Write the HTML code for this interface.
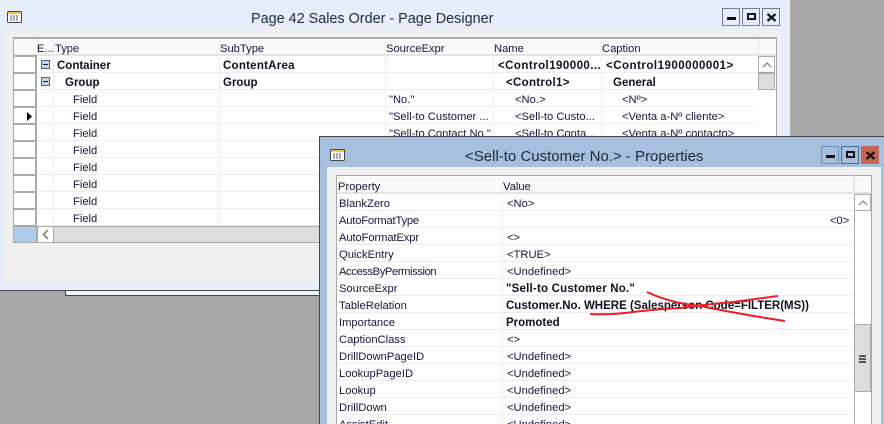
<!DOCTYPE html>
<html><head><meta charset="utf-8"><style>
html,body{margin:0;padding:0;width:884px;height:424px;overflow:hidden;background:#a8a8a8}
div,span{position:absolute;box-sizing:border-box}
.t{font:11.2px/16px "Liberation Sans",sans-serif;color:#15153f;white-space:nowrap;margin-top:1px}
.b{font:bold 11.5px/16px "Liberation Sans",sans-serif;color:#101020}
.h{color:#15153f}
.tb{font:15px/20px "Liberation Sans",sans-serif;color:#222c3c;white-space:nowrap;margin-top:1px}
.btn{border:1px solid #6d7f9c;width:18px;height:18px}
#clip{left:0;top:0;width:884px;height:424px;overflow:hidden}
</style></head><body><div id="clip">
<div style="left:65px;top:290px;width:260px;height:6px;background:#eef2fb;border:1px solid #444;border-width:1px 0 1px 1px"></div>
<div style="left:0;top:0;width:790px;height:291px;background:#e6edfb;border-bottom:1px solid #4a4a4a"></div>
<div style="left:4px;top:30px;width:778px;height:253px;background:#f0f0f0"></div>
<svg style="position:absolute;left:7px;top:10px" width="16" height="14"><rect x=".5" y="1.5" width="14" height="11" rx="1" fill="#fff" stroke="#44464a"/><rect x="1" y="2" width="13" height="2" fill="#f2c24a"/><path d="M3 6h9M3 8h9M3 10h9" stroke="#555" stroke-dasharray="2 1"/></svg>
<div class="tb" style="left:251px;top:8px;font-size:14.4px">Page 42 Sales Order - Page Designer</div>
<div class="btn" style="left:722px;top:8px"><span style="left:4px;top:8px;width:9px;height:3px;background:#111"></span></div>
<div class="btn" style="left:742px;top:8px"><span style="left:4px;top:4px;width:9px;height:7px;border:2px solid #111"></span></div>
<div class="btn" style="left:762px;top:8px"><svg style="position:absolute;left:3px;top:4px" width="11" height="10"><path d="M1.5 1l8 7M9.5 1l-8 7" stroke="#111" stroke-width="2.2"/></svg></div>

<div style="left:13px;top:37px;width:764px;height:206px;background:#fff;border:1px solid #aaa;border-width:2px 1px 1px 1px"></div>
<div style="left:14px;top:39px;width:762px;height:17px;background:#fafafa;border-bottom:2px solid #e4e4e4"></div>
<div style="left:37px;top:56px;width:721px;height:170px;background:repeating-linear-gradient(to bottom,#fff 0,#fff 16px,#eeeeee 16px,#eeeeee 17px)"></div>
<div style="left:14px;top:55px;width:23px;height:172px;background:repeating-linear-gradient(to bottom,#aaa 0,#aaa 2px,#fff 2px,#fff 17px);border-right:2px solid #aaa"></div>
<div style="left:37px;top:39px;width:1px;height:17px;background:#e4e4e4"></div>
<div style="left:53px;top:39px;width:1px;height:187px;background:#eee"></div>
<div style="left:219px;top:39px;width:1px;height:187px;background:#eee"></div>
<div style="left:385px;top:39px;width:1px;height:187px;background:#eee"></div>
<div style="left:493px;top:39px;width:1px;height:187px;background:#eee"></div>
<div style="left:601px;top:39px;width:1px;height:187px;background:#eee"></div>
<div style="left:758px;top:39px;width:1px;height:17px;background:#e4e4e4"></div>
<div style="left:14px;top:226px;width:762px;height:1px;background:#aaa"></div>
<div style="left:14px;top:227px;width:22px;height:15px;background:#aecdec"></div>
<div style="left:36px;top:227px;width:2px;height:15px;background:#aaa"></div>
<div style="left:38px;top:227px;width:16px;height:15px;background:#fff;border-right:1px solid #aaa"><svg style="position:absolute;left:3px;top:2px" width="10" height="11"><path d="M7 1L2.5 5.5L7 10" fill="none" stroke="#777" stroke-width="1.5"/></svg></div>
<div style="left:54px;top:227px;width:722px;height:15px;background:#dcdcdc"></div>
<div style="left:758px;top:56px;width:18px;height:170px;background:#fff"></div>
<div style="left:758px;top:56px;width:17px;height:17px;border:1px solid #aaa;background:#fff"><svg style="position:absolute;left:3px;top:4px" width="10" height="8"><path d="M1 6L5 2L9 6" fill="none" stroke="#888" stroke-width="1.3"/></svg></div>
<div style="left:758px;top:73px;width:17px;height:17px;border:1px solid #aaa;background:#dcdcdc"></div>

<div style="left:41px;top:60px;width:9px;height:9px;background:#c5d3e6;border:1px solid #4e6382"><span style="left:1px;top:3px;width:5px;height:1px;background:#123"></span></div>
<div style="left:41px;top:77px;width:9px;height:9px;background:#c5d3e6;border:1px solid #4e6382"><span style="left:1px;top:3px;width:5px;height:1px;background:#123"></span></div>
<svg style="position:absolute;left:26px;top:112px" width="7" height="10"><path d="M1 0L6 4.5L1 9Z" fill="#000"/></svg>

<div class="t h" style="left:37px;top:40px">E...</div>
<div class="t h" style="left:55px;top:40px">Type</div>
<div class="t h" style="left:220px;top:40px">SubType</div>
<div class="t h" style="left:386px;top:40px">SourceExpr</div>
<div class="t h" style="left:494px;top:40px">Name</div>
<div class="t h" style="left:602px;top:40px">Caption</div>

<div class="t b" style="left:57px;top:57px">Container</div>
<div class="t b" style="left:223px;top:57px;letter-spacing:.25px">ContentArea</div>
<div class="t b" style="left:498px;top:57px;letter-spacing:.45px">&lt;Control190000...</div>
<div class="t b" style="left:606px;top:57px;letter-spacing:.5px">&lt;Control1900000001&gt;</div>
<div class="t b" style="left:65px;top:74px">Group</div>
<div class="t b" style="left:223px;top:74px">Group</div>
<div class="t b" style="left:506px;top:74px;letter-spacing:.3px">&lt;Control1&gt;</div>
<div class="t b" style="left:613px;top:74px">General</div>
<div class="t" style="left:73px;top:91px">Field</div>
<div class="t" style="left:389px;top:91px">"No."</div>
<div class="t" style="left:515px;top:91px">&lt;No.&gt;</div>
<div class="t" style="left:622px;top:91px">&lt;Nº&gt;</div>
<div class="t" style="left:73px;top:108px">Field</div>
<div class="t" style="left:389px;top:108px">"Sell-to Customer ...</div>
<div class="t" style="left:515px;top:108px">&lt;Sell-to Custo...</div>
<div class="t" style="left:622px;top:108px">&lt;Venta a-Nº cliente&gt;</div>
<div class="t" style="left:73px;top:125px">Field</div>
<div class="t" style="left:389px;top:125px">"Sell-to Contact No."</div>
<div class="t" style="left:515px;top:125px">&lt;Sell-to Conta...</div>
<div class="t" style="left:622px;top:125px">&lt;Venta a-Nº contacto&gt;</div>
<div class="t" style="left:73px;top:142px">Field</div>
<div class="t" style="left:73px;top:159px">Field</div>
<div class="t" style="left:73px;top:176px">Field</div>
<div class="t" style="left:73px;top:193px">Field</div>
<div class="t" style="left:73px;top:210px">Field</div>

<div style="left:319px;top:136px;width:565px;height:288px;background:#a6bfdc;border:1px solid #3f4650;border-width:1px 0 0 1px"></div>
<div style="left:327px;top:167px;width:554px;height:257px;background:#f0f0f0"></div>
<svg style="position:absolute;left:330px;top:148px" width="16" height="14"><rect x=".5" y="1.5" width="14" height="11" rx="1" fill="#fff" stroke="#44464a"/><rect x="1" y="2" width="13" height="2" fill="#f2c24a"/><path d="M3 6h9M3 8h9M3 10h9" stroke="#555" stroke-dasharray="2 1"/></svg>
<div class="tb" style="left:465px;top:146px;font-size:15px">&lt;Sell-to Customer No.&gt; - Properties</div>
<div class="btn" style="left:821px;top:146px;border-color:#6d8db5"><span style="left:4px;top:8px;width:9px;height:3px;background:#111"></span></div>
<div class="btn" style="left:841px;top:146px;border-color:#4a6a90"><span style="left:4px;top:4px;width:9px;height:7px;border:2px solid #111"></span></div>
<div class="btn" style="left:861px;top:146px;background:#cd6250;border-color:#b9705f"><svg style="position:absolute;left:3px;top:4px" width="11" height="10"><path d="M1.5 1l8 7M9.5 1l-8 7" stroke="#111" stroke-width="2.2"/></svg></div>

<div style="left:336px;top:175px;width:536px;height:249px;background:#fff;border:1px solid #aaa;border-bottom:0"></div>
<div style="left:337px;top:177px;width:534px;height:17px;background:#fafafa;border-bottom:2px solid #e4e4e4"></div>
<div style="left:337px;top:194px;width:517px;height:230px;background:repeating-linear-gradient(to bottom,#fff 0,#fff 16px,#eeeeee 16px,#eeeeee 17px)"></div>
<div style="left:502px;top:177px;width:1px;height:247px;background:#eee"></div>
<div style="left:853px;top:177px;width:2px;height:17px;background:#e4e4e4"></div>
<div style="left:854px;top:194px;width:17px;height:230px;background:#fff;border-left:1px solid #aaa"></div>
<div style="left:854px;top:194px;width:17px;height:17px;border:1px solid #aaa;background:#fff"><svg style="position:absolute;left:3px;top:4px" width="10" height="8"><path d="M1 6L5 2L9 6" fill="none" stroke="#888" stroke-width="1.3"/></svg></div>
<div style="left:854px;top:324px;width:17px;height:68px;border:1px solid #aaa;background:#dcdcdc"><span style="left:4px;top:30px;width:7px;height:8px;background:repeating-linear-gradient(to bottom,#555 0,#555 2px,#dcdcdc 2px,#dcdcdc 3px)"></span></div>

<div class="t h" style="left:338px;top:178px">Property</div>
<div class="t h" style="left:503px;top:178px">Value</div>

<div class="t" style="left:339px;top:195px">BlankZero</div><div class="t" style="left:507px;top:195px">&lt;No&gt;</div>
<div class="t" style="left:339px;top:212px;letter-spacing:-.2px">AutoFormatType</div><div class="t" style="left:830px;top:212px">&lt;0&gt;</div>
<div class="t" style="left:339px;top:229px;letter-spacing:-.1px">AutoFormatExpr</div><div class="t" style="left:507px;top:229px">&lt;&gt;</div>
<div class="t" style="left:339px;top:246px">QuickEntry</div><div class="t" style="left:507px;top:246px">&lt;TRUE&gt;</div>
<div class="t" style="left:339px;top:263px;letter-spacing:-.4px">AccessByPermission</div><div class="t" style="left:507px;top:263px">&lt;Undefined&gt;</div>
<div class="t" style="left:339px;top:280px">SourceExpr</div><div class="t b" style="left:506px;top:280px;letter-spacing:.2px">"Sell-to Customer No."</div>
<div class="t" style="left:339px;top:297px">TableRelation</div><div class="t b" style="left:506px;top:297px">Customer.No. WHERE (Salesperson Code=FILTER(MS))</div>
<div class="t" style="left:339px;top:314px">Importance</div><div class="t b" style="left:506px;top:314px">Promoted</div>
<div class="t" style="left:339px;top:331px">CaptionClass</div><div class="t" style="left:507px;top:331px">&lt;&gt;</div>
<div class="t" style="left:339px;top:348px">DrillDownPageID</div><div class="t" style="left:507px;top:348px">&lt;Undefined&gt;</div>
<div class="t" style="left:339px;top:365px">LookupPageID</div><div class="t" style="left:507px;top:365px">&lt;Undefined&gt;</div>
<div class="t" style="left:339px;top:382px">Lookup</div><div class="t" style="left:507px;top:382px">&lt;Undefined&gt;</div>
<div class="t" style="left:339px;top:399px">DrillDown</div><div class="t" style="left:507px;top:399px">&lt;Undefined&gt;</div>
<div class="t" style="left:339px;top:416px">AssistEdit</div><div class="t" style="left:507px;top:416px">&lt;Undefined&gt;</div>

<svg style="position:absolute;left:0;top:0" width="884" height="424"><path d="M647 292Q670 303 700 306Q745 315 785 321" fill="none" stroke="#ee1c25" stroke-width="2"/><path d="M590 314Q612 315 633 312Q660 309 680 308Q710 304 733 302Q755 299 778 296" fill="none" stroke="#ee1c25" stroke-width="2"/></svg>
</div></body></html>
